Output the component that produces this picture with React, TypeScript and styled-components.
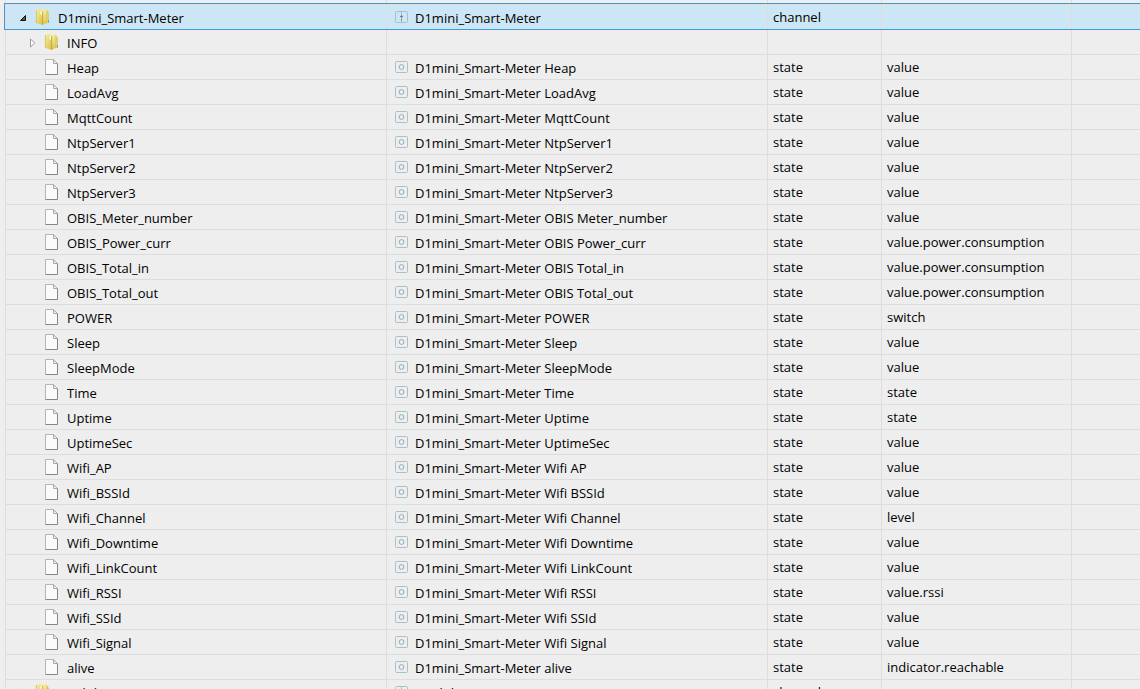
import React from "react";
import styled, { createGlobalStyle, css } from "styled-components";

const GlobalStyle = createGlobalStyle`
  body {
    margin: 0;
    background: #eeeeee;
    color: #000;
    font-family: "Segoe UI", "Open Sans", "Noto Sans", sans-serif;
    font-size: 13px;
  }
`;

type Kind = "channel" | "state";

interface Item {
  id: string;
  name?: string;
  kind?: Kind;
  role?: string;
  level: number;
  folder?: "open" | "closed";
  selected?: boolean;
}

const DEVICE = "D1mini_Smart-Meter";

const state = (id: string, label: string, role: string): Item => ({
  id,
  name: `${DEVICE} ${label}`,
  kind: "state",
  role,
  level: 1,
});

const items: Item[] = [
  { id: DEVICE, name: DEVICE, kind: "channel", level: 0, folder: "open", selected: true },
  { id: "INFO", level: 1, folder: "closed" },
  state("Heap", "Heap", "value"),
  state("LoadAvg", "LoadAvg", "value"),
  state("MqttCount", "MqttCount", "value"),
  state("NtpServer1", "NtpServer1", "value"),
  state("NtpServer2", "NtpServer2", "value"),
  state("NtpServer3", "NtpServer3", "value"),
  state("OBIS_Meter_number", "OBIS Meter_number", "value"),
  state("OBIS_Power_curr", "OBIS Power_curr", "value.power.consumption"),
  state("OBIS_Total_in", "OBIS Total_in", "value.power.consumption"),
  state("OBIS_Total_out", "OBIS Total_out", "value.power.consumption"),
  state("POWER", "POWER", "switch"),
  state("Sleep", "Sleep", "value"),
  state("SleepMode", "SleepMode", "value"),
  state("Time", "Time", "state"),
  state("Uptime", "Uptime", "state"),
  state("UptimeSec", "UptimeSec", "value"),
  state("Wifi_AP", "Wifi AP", "value"),
  state("Wifi_BSSId", "Wifi BSSId", "value"),
  state("Wifi_Channel", "Wifi Channel", "level"),
  state("Wifi_Downtime", "Wifi Downtime", "value"),
  state("Wifi_LinkCount", "Wifi LinkCount", "value"),
  state("Wifi_RSSI", "Wifi RSSI", "value.rssi"),
  state("Wifi_SSId", "Wifi SSId", "value"),
  state("Wifi_Signal", "Wifi Signal", "value"),
  state("alive", "alive", "indicator.reachable"),
  { id: "modul-1", name: "modul-1", kind: "channel", level: 0, folder: "closed" },
];

const Page = styled.main`
  height: 100vh;
  overflow: hidden;
  padding-left: 5px;
`;

const Tree = styled.table`
  width: 100%;
  table-layout: fixed;
  border-collapse: separate;
  border-spacing: 0;
`;

const Column = styled.col<{ $width?: number }>`
  ${({ $width }) => $width && css`width: ${$width}px;`}
`;

const Cell = styled.td`
  height: 24px;
  padding: 0;
  border-top: 1px solid #dddddd;
  border-right: 1px solid #dddddd;
  line-height: 24px;
  white-space: nowrap;
  overflow: hidden;

  &:first-child {
    border-left: 1px solid #dddddd;
  }
  &:last-child {
    border-right: 0;
  }
`;

const EdgeCell = styled(Cell)`
  height: 4px;
  border-top: 0;
`;

const Row = styled.tr<{ $selected?: boolean }>`
  ${({ $selected }) =>
    $selected &&
    css`
      background: #cde6f5;
      outline: 1px solid #4297d7;
    `}
`;

const TreeNode = styled.div<{ $level: number }>`
  display: flex;
  align-items: center;
  height: 24px;
  padding: 2px 0 0 ${({ $level }) => 11 + $level * 9}px;
  box-sizing: border-box;
`;

const Toggle = styled.button`
  display: flex;
  align-items: center;
  justify-content: center;
  width: 12px;
  height: 16px;
  margin-right: 6px;
  padding: 0;
  border: 0;
  background: none;
`;

const ToggleSpace = styled.span`
  width: 18px;
`;

const NodeIcon = styled.svg`
  flex: none;
  width: 16px;
  height: 16px;
  margin: 0 7px 2px 0;
`;

const NameBox = styled.div`
  display: flex;
  align-items: center;
  height: 24px;
  padding: 2px 0 0 8px;
  box-sizing: border-box;
`;

const KindIcon = styled.svg`
  flex: none;
  width: 14px;
  height: 12px;
  margin: 0 6px 2px 0;
`;

const Plain = styled.div`
  height: 24px;
  padding-left: 5px;
`;

const Arrow = ({ open }: { open: boolean }) =>
  open ? (
    <svg width="8" height="8" viewBox="0 0 8 8" aria-hidden="true">
      <path d="M6.5 1.5v5h-5z" fill="#555" stroke="#111" />
    </svg>
  ) : (
    <svg width="8" height="10" viewBox="0 0 8 10" aria-hidden="true">
      <path d="M2.5 1v8L6.800 5z" fill="#fff" stroke="#9c9c9c" />
    </svg>
  );

const FolderIcon = () => (
  <NodeIcon viewBox="0 0 16 16" aria-hidden="true">
    <defs>
      <linearGradient id="cover" x1="0" x2="1" y1="0" y2="1">
        <stop offset="0" stopColor="#f8f0a0" />
        <stop offset="1" stopColor="#d8bd48" />
      </linearGradient>
      <linearGradient id="sheet" x1="0" x2="0" y1="0" y2="1">
        <stop offset="0" stopColor="#f5ec9c" />
        <stop offset="1" stopColor="#dfc653" />
      </linearGradient>
    </defs>
    <path d="M11 3h2l1 1v10h-3z" fill="#dfc968" />
    <path d="M13 11h1v2.500h-1z" fill="#4faee0" />
    <path d="M12.200 4.500v9" stroke="#f2e7a2" />
    <path d="M6 1.500 7 .5h5v13.500L8 15.500z" fill="url(#sheet)" />
    <path d="M12 1v13" stroke="#cdb352" strokeWidth=".7" />
    <path d="M1 1 2 .5h4L8 2.500V16L1 14z" fill="url(#cover)" />
    <path d="M7.600 2.500V16" stroke="#bfa33a" strokeWidth=".8" />
    <path d="M1.400 1v13" stroke="#d5bf5c" strokeWidth=".8" />
    <path d="M5.500 1v4l1.500 1.500v-4z" fill="#fffce0" />
  </NodeIcon>
);

const FileIcon = () => (
  <NodeIcon viewBox="0 0 16 16" aria-hidden="true">
    <path d="M1.500.5h9l3 3v12h-12z" fill="#fafbf8" />
    <path d="M1.500 15.500V.5h8" fill="none" stroke="#b4b5b3" />
    <path d="M1.500 15.500h12V4" fill="none" stroke="#858784" />
    <path d="M9.500.5v4h4z" fill="#eeeeee" stroke="#aaaba9" />
  </NodeIcon>
);

const KindMark = ({ kind }: { kind: Kind }) => (
  <KindIcon viewBox="0 0 14 12" aria-hidden="true">
    <rect x=".5" y=".5" width="12" height="11" rx="1" fill="none" stroke="#a9bfca" />
    {kind === "state" ? (
      <circle cx="6.500" cy="6" r="2.400" fill="none" stroke="#8eacba" />
    ) : (
      <>
        <path d="M6.500 1v10" stroke="#a9bfca" />
        <path d="M5 5.500h3M6.500 4v3M6.500 8v1.500" stroke="#5c8799" />
      </>
    )}
  </KindIcon>
);

export default function App() {
  return (
    <>
      <GlobalStyle />
      <Page>
        <Tree>
          <colgroup>
            <Column $width={382} />
            <Column $width={381} />
            <Column $width={114} />
            <Column $width={190} />
            <Column />
          </colgroup>
          <tbody>
            <tr aria-hidden="true">
              <EdgeCell />
              <EdgeCell />
              <EdgeCell />
              <EdgeCell />
              <EdgeCell />
            </tr>
            {items.map((item) => (
              <Row key={item.id} $selected={item.selected}>
                <Cell>
                  <TreeNode $level={item.level}>
                    {item.folder ? (
                      <Toggle
                        aria-label={`Toggle ${item.id}`}
                        aria-expanded={item.folder === "open"}
                      >
                        <Arrow open={item.folder === "open"} />
                      </Toggle>
                    ) : (
                      <ToggleSpace />
                    )}
                    {item.folder ? <FolderIcon /> : <FileIcon />}
                    <span>{item.id}</span>
                  </TreeNode>
                </Cell>
                <Cell>
                  {item.kind && (
                    <NameBox>
                      <KindMark kind={item.kind} />
                      <span>{item.name}</span>
                    </NameBox>
                  )}
                </Cell>
                <Cell>
                  <Plain>{item.kind}</Plain>
                </Cell>
                <Cell>
                  <Plain>{item.role}</Plain>
                </Cell>
                <Cell />
              </Row>
            ))}
          </tbody>
        </Tree>
      </Page>
    </>
  );
}
